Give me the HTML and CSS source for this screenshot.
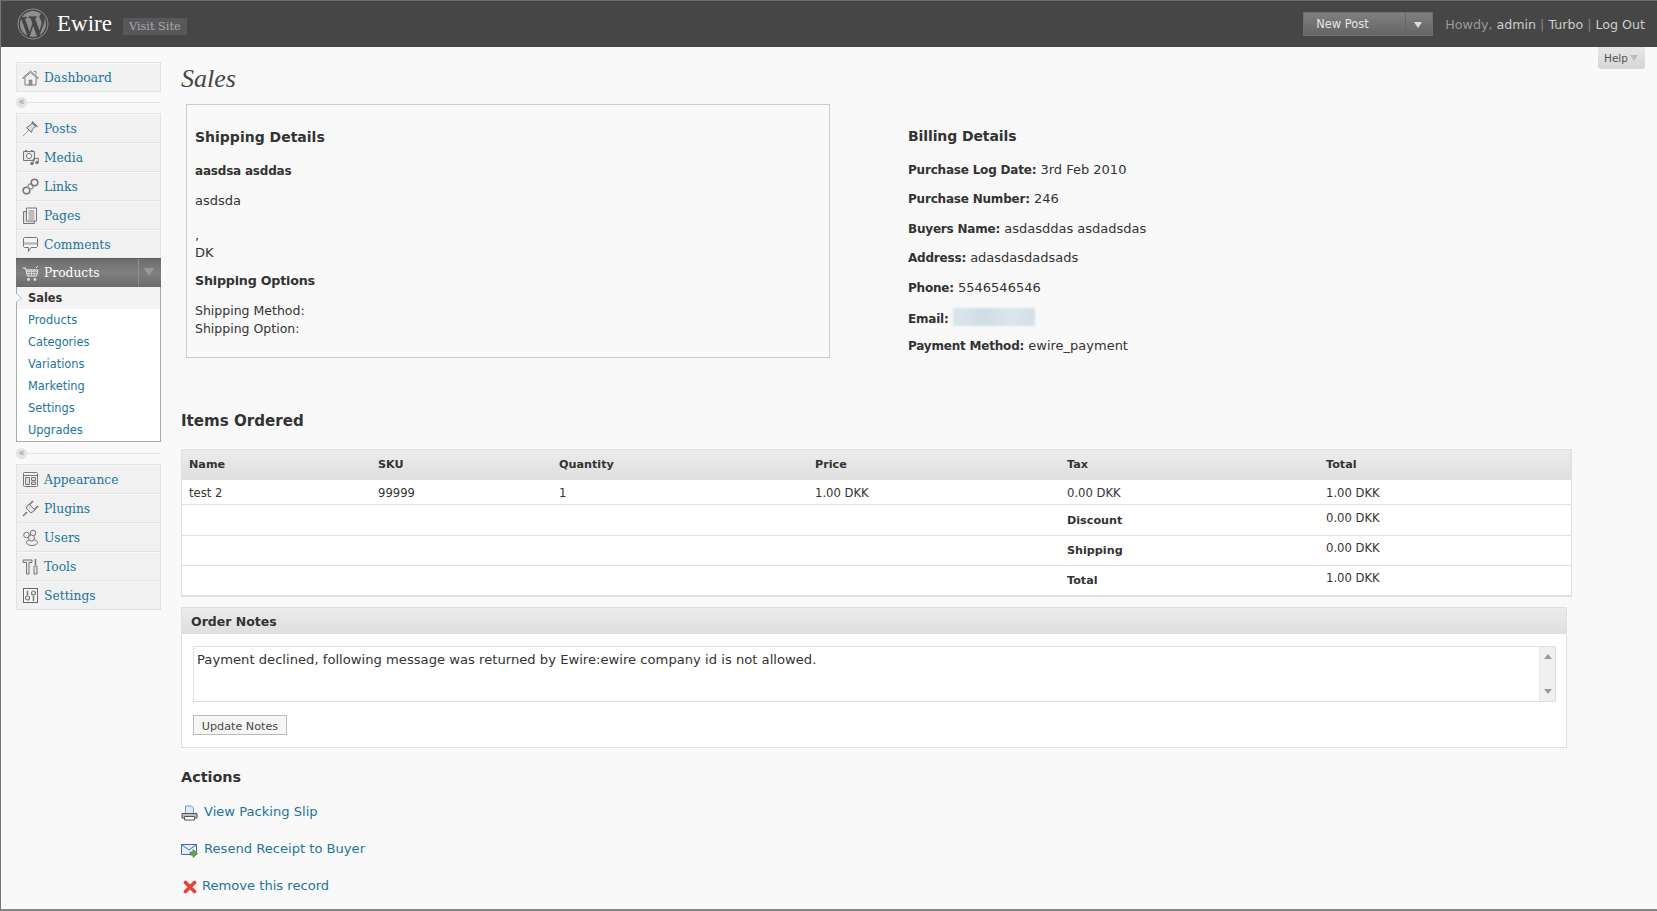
FILE: index.html
```html
<!DOCTYPE html>
<html lang="en">
<head>
    <meta charset="UTF-8">
    <title>Sales - Ewire</title>
    <link rel="stylesheet" href="styles.css">
</head>
<body>
    <header class="topbar">
        <svg class="wp-logo" viewBox="-1 -1 22 22"><circle cx="10" cy="10" r="10" fill="#8f8f8f"/><path fill="#464646" d="M20 10c0-5.510-4.490-10-10-10C4.480 0 0 4.490 0 10c0 5.520 4.480 10 10 10 5.510 0 10-4.480 10-10zM7.780 15.370L4.370 6.220c.550-.020 1.170-.080 1.170-.080.500-.060.440-1.130-.060-1.110 0 0-1.450.110-2.370.110-.180 0-.370 0-.580-.010C4.120 2.690 6.890 1.050 10 1.050c2.320 0 4.430.870 6.020 2.320-.680-.110-1.650.390-1.650 1.580 0 .740.450 1.360.900 2.100.350.610.550 1.360.550 2.460 0 1.490-1.400 5-1.400 5l-3.030-8.370c.540-.020.820-.170.820-.170.500-.050.440-1.250-.060-1.220 0 0-1.440.120-2.380.120-.870 0-2.330-.120-2.330-.120-.500-.030-.560 1.200-.060 1.220l.920.080 1.260 3.410zM17.410 10c.240-.640.740-1.870.430-4.250.700 1.290 1.050 2.710 1.050 4.250 0 3.290-1.730 6.240-4.400 7.780.970-2.590 1.940-5.200 2.920-7.780zM6.100 18.090C3.120 16.650 1.110 13.530 1.110 10c0-1.300.230-2.480.720-3.590C3.250 10.300 4.670 14.200 6.100 18.090zm4.030-6.630l2.580 6.980c-.860.290-1.760.450-2.710.450-.790 0-1.570-.110-2.290-.330.810-2.380 1.620-4.740 2.420-7.100z"/><circle cx="10" cy="10" r="10.400" fill="none" stroke="#8f8f8f" stroke-width=".6"/></svg>
        <span class="site-name">Ewire</span>
        <a class="visit-site">Visit Site</a>
        <div class="topbar-right">
            <div class="new-post"><span class="new-post-label">New Post</span><span class="new-post-arrow"></span></div>
            <div class="howdy">Howdy, <a>admin</a> <i>|</i> <a>Turbo</a> <i>|</i> <a>Log Out</a></div>
        </div>
    </header>
    <a class="help-tab">Help<span class="help-arrow"></span></a>

    <div class="wrap">
        <nav class="sidebar">
            <ul class="menu">
                <li><svg class="ico" viewBox="0 0 17 17"><path d="M.5 9L8.500 2l8 7-1 .5-7-6-7 6z" fill="#ccc" stroke="#777" stroke-width=".8"/><path d="M3 9v7h11V9" fill="#f4f4f4" stroke="#777"/><path d="M7 16v-5h3v5z" fill="#999" stroke="#777" stroke-width=".6"/><path d="M12 2.500h2v3" fill="none" stroke="#888"/></svg><a>Dashboard</a></li>
            </ul>
            <div class="menu-sep"><span>«</span></div>
            <ul class="menu">
                <li><svg class="ico" viewBox="0 0 17 17"><path d="M1 16l6-6" stroke="#999"/><path d="M4.500 7.500l5 5 1-3.500 3-2.500-3.500-3.500-2.500 3z" fill="#ddd" stroke="#777"/><path d="M10 1.500l5.500 5.500" stroke="#777" stroke-width="1.500"/></svg><a>Posts</a></li>
                <li><svg class="ico" viewBox="0 0 17 17"><path d="M1.500 2.500h11v9h-11z" fill="#e8e8e8" stroke="#777"/><circle cx="7" cy="7" r="2.500" fill="#fff" stroke="#777"/><path d="M3 1.500h2M9 1.500h2" stroke="#777"/><circle cx="10" cy="14.500" r="1.700" fill="#777"/><circle cx="15" cy="13.500" r="1.700" fill="#777"/><path d="M11.300 14.500V10l5-1v4.500" fill="none" stroke="#777"/></svg><a>Media</a></li>
                <li><svg class="ico" viewBox="0 0 17 17"><circle cx="4.500" cy="12.500" r="3.300" fill="none" stroke="#777" stroke-width="1.600"/><circle cx="8.500" cy="8.500" r="2.500" fill="none" stroke="#999" stroke-width="1.400"/><circle cx="12.500" cy="4.500" r="3.300" fill="none" stroke="#777" stroke-width="1.600"/></svg><a>Links</a></li>
                <li><svg class="ico" viewBox="0 0 17 17"><path d="M1.500 4.500h11v12h-11z" fill="#ddd" stroke="#777"/><path d="M4.500 1h10v13h-10z" fill="#f4f4f4" stroke="#777"/><path d="M6.500 4h6M6.500 6h6M6.500 8h6M6.500 10h6M6.500 12h6" stroke="#888"/></svg><a>Pages</a></li>
                <li><svg class="ico" viewBox="0 0 17 17"><path d="M2.500 1.500h12l1 1v8l-1 1H9l-2.500 4v-4h-4l-1-1v-8z" fill="#f4f4f4" stroke="#777"/><path d="M2 7.500h13" stroke="#bbb" stroke-width="2.500"/></svg><a>Comments</a></li>
                <li class="current">
                    <div class="current-head">
                        <svg class="ico" viewBox="0 0 17 17"><path d="M.5 3h3l2 8h9l1.500-6H4" fill="none" stroke="#eee"/><path d="M4.500 6.500h11M5 8.500h10M7 4v7M9.500 4v7M12 4v7" stroke="#ddd" stroke-width=".8"/><path d="M14 3l2-2" stroke="#eee"/><circle cx="6.500" cy="14.500" r="1.400" fill="#ddd"/><circle cx="13" cy="14.500" r="1.400" fill="#ddd"/></svg>
                        <a>Products</a>
                        <span class="toggle"></span>
                    </div>
                    <ul class="submenu">
                        <li class="active"><a>Sales</a></li>
                        <li><a>Products</a></li>
                        <li><a>Categories</a></li>
                        <li><a>Variations</a></li>
                        <li><a>Marketing</a></li>
                        <li><a>Settings</a></li>
                        <li><a>Upgrades</a></li>
                    </ul>
                </li>
            </ul>
            <div class="menu-sep wide"><span>«</span></div>
            <ul class="menu">
                <li><svg class="ico" viewBox="0 0 17 17"><rect x="1.500" y="1.500" width="14" height="14" rx="1" fill="#f4f4f4" stroke="#777"/><path d="M1.500 4.500h14" stroke="#777"/><path d="M3.500 6.500h4v7h-4zM9.500 6.500h4v3h-4zM9.500 11h4v2.500h-4z" fill="#ddd" stroke="#777"/></svg><a>Appearance</a></li>
                <li><svg class="ico" viewBox="0 0 17 17"><path d="M1 16l4-4" stroke="#777" stroke-width="1.500"/><path d="M4 8l5 5 4-3-6-6z" fill="#e4e4e4" stroke="#777"/><path d="M7.500 4.500l3.500-3.500M12.500 9.500l3.500-3.500" stroke="#777" stroke-width="1.500"/></svg><a>Plugins</a></li>
                <li><svg class="ico" viewBox="0 0 17 17"><circle cx="4.500" cy="6" r="2.800" fill="#eee" stroke="#777"/><circle cx="11" cy="4" r="2.800" fill="#eee" stroke="#777"/><ellipse cx="10" cy="13.500" rx="5.500" ry="3" fill="#eee" stroke="#777"/><circle cx="9.500" cy="9" r="3" fill="#eee" stroke="#777"/></svg><a>Users</a></li>
                <li><svg class="ico" viewBox="0 0 17 17"><path d="M1 2h9v2.500H7V16H4.500V4.500H1z" fill="#e4e4e4" stroke="#777"/><path d="M13.500 1v6" stroke="#777" stroke-width="1.500"/><path d="M12 8h3v8h-3z" fill="#e4e4e4" stroke="#777"/></svg><a>Tools</a></li>
                <li><svg class="ico" viewBox="0 0 17 17"><rect x="1.500" y="1.500" width="14" height="14" fill="#f8f8f8" stroke="#666"/><path d="M5.500 3.500v5M11.500 9v5" stroke="#777" stroke-width="1.500"/><circle cx="5.500" cy="11" r="2" fill="none" stroke="#777" stroke-width="1.200"/><circle cx="11.500" cy="6" r="2" fill="none" stroke="#777" stroke-width="1.200"/></svg><a>Settings</a></li>
            </ul>
        </nav>

        <main class="content">
            <h2 class="page-title">Sales</h2>

            <div class="details">
                <section class="shipping-box">
                    <h3>Shipping Details</h3>
                    <p><strong>aasdsa asddas</strong></p>
                    <p>asdsda</p>
                    <p class="address">,<br>DK</p>
                    <p class="options-title"><strong>Shipping Options</strong></p>
                    <p class="options">Shipping Method:<br>Shipping Option:</p>
                </section>
                <section class="billing-box">
                    <h3>Billing Details</h3>
                    <p><strong>Purchase Log Date:</strong> 3rd Feb 2010</p>
                    <p><strong>Purchase Number:</strong> 246</p>
                    <p><strong>Buyers Name:</strong> asdasddas asdadsdas</p>
                    <p><strong>Address:</strong> adasdasdadsads</p>
                    <p><strong>Phone:</strong> 5546546546</p>
                    <p><strong>Email:</strong> <span class="blurred"></span></p>
                    <p><strong>Payment Method:</strong> ewire_payment</p>
                </section>
            </div>

            <h3 class="items-title">Items Ordered</h3>
            <table class="items">
                <thead>
                    <tr><th class="c-name">Name</th><th class="c-sku">SKU</th><th class="c-qty">Quantity</th><th class="c-price">Price</th><th class="c-tax">Tax</th><th>Total</th></tr>
                </thead>
                <tbody>
                    <tr class="first"><td>test 2</td><td>99999</td><td>1</td><td>1.00 DKK</td><td>0.00 DKK</td><td>1.00 DKK</td></tr>
                    <tr class="tall"><td></td><td></td><td></td><td></td><td><strong>Discount</strong></td><td class="up">0.00 DKK</td></tr>
                    <tr><td></td><td></td><td></td><td></td><td><strong>Shipping</strong></td><td class="up">0.00 DKK</td></tr>
                    <tr><td></td><td></td><td></td><td></td><td><strong>Total</strong></td><td class="up">1.00 DKK</td></tr>
                </tbody>
            </table>

            <section class="notes">
                <h4 class="notes-head">Order Notes</h4>
                <div class="notes-body">
                    <div class="notes-field">
                        <div class="notes-text">Payment declined, following message was returned by Ewire:ewire company id is not allowed.</div>
                        <div class="scrollbar"><span class="arrow-up"></span><span class="arrow-down"></span></div>
                    </div>
                    <button class="update-btn">Update Notes</button>
                </div>
            </section>

            <h3 class="actions-title">Actions</h3>
            <ul class="actions">
                <li><svg class="act-ico" viewBox="0 0 17 16"><path d="M4.500 1h6l2 2v6h-8z" fill="#dfe9f7" stroke="#7f9cc4"/><path d="M1 8.500h15V13H1z" fill="#b9bcc0" stroke="#555"/><path d="M3.500 11.500h10V15h-10z" fill="#fff" stroke="#555"/></svg><a>View Packing Slip</a></li>
                <li><svg class="act-ico" viewBox="0 0 17 16"><path d="M.5 2.500h15v10H.5z" fill="#e6eefa" stroke="#3f6cb0"/><path d="M.5 2.500L8 8l7.500-5.500" fill="none" stroke="#3f6cb0"/><path d="M9 10h3V7.500l4.500 4-4.500 4V13H9z" fill="#6aa84f" stroke="#3c7a2c" stroke-width=".7"/></svg><a>Resend Receipt to Buyer</a></li>
                <li class="remove"><svg class="rem-ico" viewBox="0 0 14 14"><path d="M2.500 2.500l9 9M11.500 2.500l-9 9" stroke="#e8413a" stroke-width="3.600" stroke-linecap="round"/></svg><a>Remove this record</a></li>
            </ul>
        </main>
    </div>
</body>
</html>
```

FILE: styles.css
```css
* {
    box-sizing: border-box;
}
html, body {
    height: 911px;
    overflow: hidden;
}
body {
    margin: 0;
    background-color: #f9f9f9;
    border-left: 1px solid #777;
    border-bottom: 2px solid #888;
    font-family: "DejaVu Sans", Verdana, sans-serif;
    font-size: 13px;
    color: #333;
    position: relative;
}
strong {
    font-size: 12px;
    letter-spacing: -0.2px;
}
a {
    color: #21759b;
    text-decoration: none;
}
ul {
    list-style: none;
    margin: 0;
    padding: 0;
}

/* top bar */
.topbar {
    height: 47px;
    background-color: #464646;
    border-top: 1px solid #6d6d6d;
    margin-left: -1px;
    padding: 0 12px 0 17px;
    display: flex;
    align-items: center;
}
.wp-logo {
    width: 32px;
    height: 32px;
    flex: none;
}
.site-name {
    font-family: "Liberation Serif", Georgia, serif;
    font-size: 23px;
    color: #fff;
    margin-left: 8px;
}
.visit-site {
    margin-left: 11px;
    margin-top: 4px;
    padding: 0 6px;
    height: 17px;
    line-height: 17px;
    background-color: #58585a;
    color: #aaa;
    font-family: "DejaVu Serif", Georgia, serif;
    font-size: 11.300px;
}
.topbar-right {
    margin-left: auto;
    display: flex;
    align-items: center;
}
.new-post {
    width: 130px;
    height: 24px;
    background: linear-gradient(#808080, #646464);
    border: 1px solid #6f6f6f;
    display: flex;
    align-items: center;
    color: #e6e6e6;
    font-size: 11.400px;
}
.new-post-label {
    flex: 1;
    padding-left: 12px;
}
.new-post-arrow {
    width: 27px;
    height: 100%;
    border-left: 1px solid #666;
    position: relative;
}
.new-post-arrow::after {
    content: "";
    position: absolute;
    left: 8px;
    top: 9px;
    border: 4px solid transparent;
    border-top: 6px solid #ddd;
}
.howdy {
    margin-left: 12px;
    color: #999;
    font-size: 12.650px;
}
.howdy a {
    color: #ccc;
}
.howdy i {
    font-style: normal;
    color: #888;
}

/* help tab */
.help-tab {
    position: absolute;
    top: 47px;
    right: 12px;
    width: 47px;
    height: 22px;
    padding-left: 6px;
    background: linear-gradient(#e6e6e6, #d6d6d6);
    border-radius: 0 0 3px 3px;
    color: #555;
    font-size: 10.500px;
    display: flex;
    align-items: center;
}
.help-arrow {
    margin-left: 2px;
    margin-top: 4px;
    border: 4px solid transparent;
    border-top: 6px solid #bbb;
}

/* layout */
.wrap {
    display: flex;
    height: 862px;
}

/* sidebar */
.sidebar {
    width: 145px;
    margin-left: 15px;
    padding-top: 15px;
    flex: none;
}
.menu {
    border: 1px solid #e3e3e3;
    border-bottom: 0;
}
.menu > li {
    height: 29px;
    display: flex;
    align-items: center;
    background-color: #f1f1f1;
    border-top: 1px solid #f9f9f9;
    border-bottom: 1px solid #e3e3e3;
    font-family: "DejaVu Serif", Georgia, serif;
    font-size: 12.300px;
    padding-left: 5px;
}
.ico {
    width: 17px;
    height: 17px;
    margin-right: 5px;
    flex: none;
}
.menu-sep {
    height: 21px;
    position: relative;
    display: flex;
    align-items: center;
}
.menu-sep.wide {
    height: 22px;
}
.menu-sep::after {
    content: "";
    flex: 1;
    height: 1px;
    background-color: #e3e3e3;
}
.menu-sep span {
    width: 11px;
    height: 11px;
    border-radius: 50%;
    background-color: #e3e3e3;
    color: #999;
    font-size: 10px;
    line-height: 9px;
    text-align: center;
    flex: none;
}
.menu > li.current {
    display: block;
    height: auto;
    padding: 0;
    margin: -1px -1px 0;
    border: 0;
    background: none;
}
.current-head {
    height: 29px;
    display: flex;
    align-items: center;
    padding-left: 6px;
    background: linear-gradient(#6d6d6d, #808080 50%, #6a6a6a);
    border-top: 1px solid #5a5a5a;
}
.current-head a {
    color: #fff;
}
.toggle {
    margin-left: auto;
    width: 23px;
    height: 100%;
    border-left: 1px solid #8e8e8e;
    position: relative;
}
.toggle::after {
    content: "";
    position: absolute;
    left: 5px;
    top: 9px;
    border: 5px solid transparent;
    border-top: 8px solid #999;
}
.submenu {
    background-color: #fff;
    border: 1px solid #aaa;
    border-top: 0;
    font-family: "DejaVu Sans", Verdana, sans-serif;
    font-size: 11.400px;
    height: 155px;
}
.submenu li {
    height: 22px;
    line-height: 23px;
    padding-left: 11px;
}
.submenu li.active {
    background-color: #f3f3f3;
    position: relative;
}
.submenu li.active a {
    color: #333;
    font-weight: bold;
}
.submenu li.active::before {
    content: "";
    position: absolute;
    left: -1px;
    top: 6px;
    border: 5px solid transparent;
    border-left: 6px solid #bbb;
}
.submenu li.active::after {
    content: "";
    position: absolute;
    left: -1px;
    top: 7px;
    border: 4px solid transparent;
    border-left: 5px solid #fff;
}

/* main */
.content {
    width: 1400px;
    margin-left: 20px;
}
.page-title {
    font-family: "Liberation Serif", Georgia, serif;
    font-style: italic;
    font-weight: normal;
    font-size: 26px;
    line-height: 30px;
    margin: 17px 0 10px;
    color: #464646;
}
h3 {
    margin: 0;
    font-size: 14px;
    color: #333;
}
.details {
    display: flex;
    height: 254px;
    margin-left: 5px;
}
.details p {
    margin: 0;
    line-height: 17px;
}
.shipping-box {
    width: 644px;
    height: 254px;
    padding: 23px 8px 0;
    border: 1px solid #ccc;
}
.shipping-box h3 {
    line-height: 18px;
    margin-bottom: 16px;
}
.shipping-box p {
    margin-bottom: 12px;
}
.shipping-box p.address {
    margin-top: 18px;
    margin-bottom: 11px;
}
.shipping-box p.options-title {
    margin-bottom: 13px;
}
.options-title strong {
    font-size: 12.700px;
}
.shipping-box p.options {
    font-size: 12.500px;
    line-height: 18px;
}
.billing-box {
    margin-left: 78px;
    padding-top: 23px;
}
.billing-box h3 {
    line-height: 18px;
    letter-spacing: -0.1px;
    margin-bottom: 16px;
}
.billing-box p {
    height: 17px;
    margin-bottom: 12.400px;
}
.blurred {
    display: inline-block;
    width: 82px;
    height: 18px;
    vertical-align: -3px;
    background: linear-gradient(90deg, #dbe6ec, #cfdde6 40%, #dbe6ec 70%, #d3e0e8);
    filter: blur(1px);
}
.items-title {
    margin-top: 54px;
    font-size: 15.100px;
    line-height: 18px;
}
.items {
    width: 1391px;
    margin-top: 19px;
    border-collapse: separate;
    border-spacing: 0;
    table-layout: fixed;
    background-color: #fff;
    border: 1px solid #dfdfdf;
    border-bottom-width: 2px;
    font-size: 11.600px;
}
.items strong, .items th {
    font-size: 11.200px;
    letter-spacing: 0;
}
.items th {
    height: 30px;
    padding: 0 7px 2px;
    text-align: left;
    background: linear-gradient(#ececec, #dfdfdf);
    color: #333;
}
.c-name { width: 189px; }
.c-sku { width: 181px; }
.c-qty { width: 256px; }
.c-price { width: 252px; }
.c-tax { width: 259px; }
.items td {
    height: 30px;
    padding: 0 7px 1px;
    border-bottom: 1px solid #dfdfdf;
}
.items tr.first td {
    height: 25px;
    padding: 2px 7px 0;
}
.items tr.tall td {
    height: 31px;
}
.items tr:last-child td {
    height: 29px;
    border-bottom: 0;
}
.items td.up {
    padding: 0 7px 5px;
}
.notes {
    width: 1386px;
    margin-top: 10px;
    border: 1px solid #dfdfdf;
    background-color: #fff;
}
.notes-head {
    margin: 0;
    height: 26px;
    line-height: 28px;
    padding-left: 9px;
    font-size: 12.500px;
    background: linear-gradient(#ececec, #dfdfdf);
}
.notes-body {
    padding: 12px 10px 12px 11px;
}
.notes-field {
    height: 56px;
    display: flex;
    border: 1px solid #dfdfdf;
}
.notes-text {
    flex: 1;
    padding: 4px 3px;
    font-size: 13.150px;
    line-height: 17px;
    color: #333;
}
.scrollbar {
    width: 16px;
    background-color: #f0f0f0;
    border-left: 1px solid #e6e6e6;
    display: flex;
    flex-direction: column;
    align-items: center;
    justify-content: space-between;
    padding: 7px 0;
}
.arrow-up {
    border: 4px solid transparent;
    border-top: 0;
    border-bottom: 5px solid #999;
}
.arrow-down {
    border: 4px solid transparent;
    border-bottom: 0;
    border-top: 5px solid #999;
}
.update-btn {
    display: block;
    margin-top: 13px;
    width: 94px;
    height: 20px;
    padding: 2px 0 0;
    background-color: #f6f6f6;
    border: 1px solid #bbb;
    border-radius: 0;
    font-family: "DejaVu Sans", Verdana, sans-serif;
    font-size: 11.200px;
    color: #464646;
}
.actions-title {
    margin-top: 20px;
    font-size: 14.400px;
    line-height: 18px;
}
.actions {
    margin-top: 17px;
    font-size: 13.100px;
}
.actions li {
    height: 37px;
    display: flex;
    align-items: flex-start;
}
.actions a {
    line-height: 18px;
}
.act-ico {
    width: 17px;
    height: 16px;
    margin: 2px 6px 0 0;
    flex: none;
}
.rem-ico {
    width: 14px;
    height: 14px;
    margin: 3px 5px 0 2px;
    flex: none;
}
```
